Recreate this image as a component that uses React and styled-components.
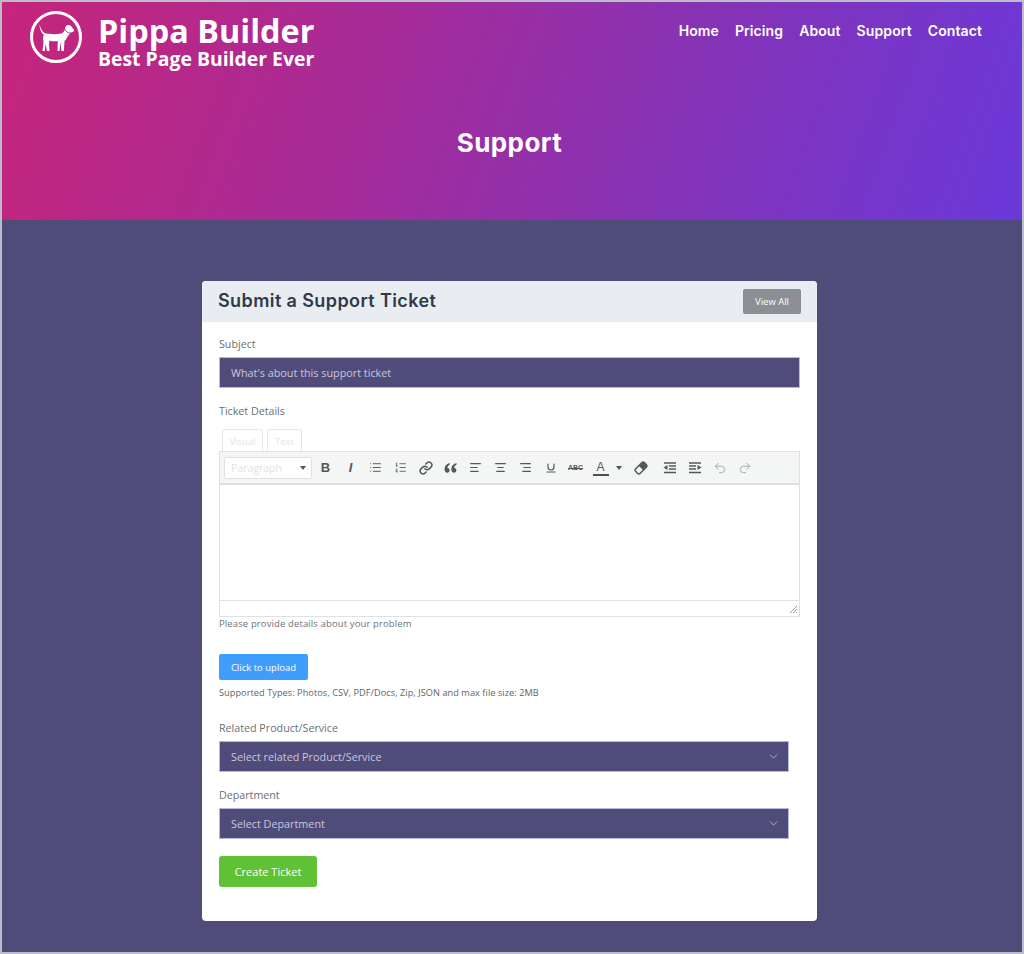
import React from 'react'
import styled, { createGlobalStyle } from 'styled-components'
import { List, ListOrdered, Link, AlignLeft, AlignCenter, AlignRight, Underline, Undo2, Redo2, ChevronDown } from 'lucide-react'

const GlobalStyle = createGlobalStyle`
  html, body { margin: 0; padding: 0; background: #504c7a; }
  * { box-sizing: border-box; }
  body { font-family: "Open Sans", "Liberation Sans", sans-serif; }
`

const Frame = styled.div`
  width: 1024px;
  height: 954px;
  border: 2px solid #bdbccb;
  background: #504c7a;
  overflow: hidden;
`

const Hero = styled.header`
  height: 218px;
  background: linear-gradient(110deg, #c6257a 0%, #a62b98 36%, #8533b6 66%, #6a38da 100%);
  display: flex;
  flex-direction: column;
`

const TopBar = styled.div`
  display: flex;
  justify-content: space-between;
  align-items: flex-start;
  padding: 8px 40px 0 27px;
`

const Brand = styled.div`
  display: flex;
  align-items: flex-start;
  gap: 15px;
  color: #fff;
`

const BrandText = styled.div`
  display: flex;
  flex-direction: column;
  padding-top: 1px;
`

const BrandName = styled.div`
  font-size: 32.4px;
  font-weight: 700;
  line-height: 38px;
`

const BrandTag = styled.div`
  font-size: 19.4px;
  font-weight: 700;
  line-height: 20px;
`

const Nav = styled.nav`
  display: flex;
  gap: 16px;
  padding-top: 12px;
`

const NavLink = styled.a`
  font-family: Inter, "Open Sans", sans-serif;
  font-size: 14px;
  font-weight: 600;
  line-height: 18px;
  letter-spacing: 0.1px;
  color: #fff;
`

const HeroTitle = styled.h1`
  margin: 59px 0 0;
  padding-right: 5px;
  text-align: center;
  color: #fff;
  font-family: Inter, "Open Sans", sans-serif;
  font-size: 26px;
  font-weight: 700;
  line-height: 30px;
  letter-spacing: 0.4px;
`

const Main = styled.main`
  padding: 61px 0 0 200px;
`

const Card = styled.section`
  width: 615px;
  height: 640px;
  background: #fff;
  border-radius: 4px;
  overflow: hidden;
`

const CardHeader = styled.div`
  height: 41px;
  background: #e9edf2;
  display: flex;
  align-items: center;
  justify-content: space-between;
  padding: 0 16px 2px 16px;
`

const CardTitle = styled.h2`
  margin: 0;
  font-family: Inter, "Open Sans", sans-serif;
  font-size: 18px;
  font-weight: 600;
  letter-spacing: 0.4px;
  color: #2f3a4a;
`

const ViewAll = styled.button`
  width: 58px;
  height: 25px;
  margin-top: 1px;
  padding: 0;
  border: 0;
  border-radius: 2px;
  background: #8b8e92;
  color: #fff;
  font: 400 9.5px "Open Sans", sans-serif;
`

const Form = styled.form`
  padding: 14px 17px 0;
  display: flex;
  flex-direction: column;
`

const Label = styled.label`
  display: block;
  height: 16px;
  margin-bottom: 5px;
  font-size: 10.7px;
  line-height: 16px;
  color: #6b6f75;
`

const Field = styled.div`
  width: ${p => p.$width}px;
  height: 31px;
  margin-bottom: ${p => p.$gap}px;
  padding: 0 8px 0 11px;
  background: #504c7a;
  border: 1px solid #b9bbdc;
  color: #c9c6de;
  font-size: 10.8px;
  display: flex;
  align-items: center;
  justify-content: space-between;
`

const Tabs = styled.div`
  display: flex;
  gap: 4px;
  height: 22px;
  margin-top: 5px;
  padding-left: 3px;
`

const Tab = styled.div`
  width: ${p => p.$width}px;
  border: 1px solid #e6e8e8;
  border-bottom: 0;
  border-radius: 3px 3px 0 0;
  color: #e3e5e5;
  font-size: 9.5px;
  line-height: 23px;
  text-align: center;
`

const Editor = styled.div`
  width: 581px;
  border: 1px solid #dfe2e2;
  display: flex;
  flex-direction: column;
`

const Toolbar = styled.div`
  height: 33px;
  padding-left: 4px;
  background: #f4f5f5;
  border-bottom: 2px solid #dcdfdf;
  display: flex;
  align-items: center;
`

const FormatSelect = styled.div`
  width: 88px;
  height: 22px;
  margin-right: 1px;
  padding: 0 5px 0 6px;
  background: #fff;
  border: 1px solid #dfe2e2;
  border-radius: 2px;
  color: #dfe1e1;
  font-size: 10.5px;
  display: flex;
  align-items: center;
  justify-content: space-between;
`

const Caret = styled.span`
  width: 0;
  height: 0;
  border-left: 3px solid transparent;
  border-right: 3px solid transparent;
  border-top: 4px solid #555;
`

const Tool = styled.span`
  width: ${p => p.$width || 25}px;
  height: 22px;
  display: flex;
  align-items: center;
  justify-content: center;
  color: ${p => (p.$muted ? '#a9acac' : '#55585a')};
`

const ToolText = styled.span`
  font-family: "Liberation Sans", sans-serif;
  font-size: 13px;
  font-weight: 700;
  font-style: ${p => (p.$italic ? 'italic' : 'normal')};
  line-height: 1;
`

const StrikeText = styled.span`
  font-family: "Liberation Sans", sans-serif;
  font-size: 7px;
  font-weight: 700;
  text-decoration: line-through;
`

const ColorA = styled.span`
  width: 16px;
  font-family: "Liberation Sans", sans-serif;
  font-size: 12px;
  line-height: 14px;
  text-align: center;
  border-bottom: 2px solid #4c4f50;
`

const EditArea = styled.div`
  height: 115px;
  background: #fff;
`

const StatusBar = styled.div`
  position: relative;
  height: 16px;
  border-top: 1px solid #dfe2e2;
`

const Grip = styled.svg`
  position: absolute;
  right: 1px;
  bottom: 2px;
`

const Help = styled.p`
  margin: 0;
  font-size: 9.5px;
  line-height: 13px;
  letter-spacing: 0.12px;
  color: #6f7378;
`

const UploadButton = styled.button`
  width: 89px;
  height: 26px;
  margin-top: 24px;
  padding: 0;
  border: 0;
  border-radius: 2px;
  background: #3f9dfb;
  color: #fff;
  font: 400 9.5px "Open Sans", sans-serif;
`

const Supported = styled(Help)`
  margin: 6px 0 21px;
  font-size: 9.2px;
  letter-spacing: 0.05px;
  color: #5f6368;
`

const CreateButton = styled.button`
  width: 98px;
  height: 31px;
  padding: 0;
  border: 0;
  border-radius: 3px;
  background: #5fc134;
  color: #fff;
  font: 400 11px "Open Sans", sans-serif;
`

const heavy = { size: 13, strokeWidth: 2.2 }

function DogLogo() {
  return (
    <svg width="54" height="54" viewBox="0 0 54 54" aria-hidden="true">
      <circle cx="27" cy="27" r="24.5" fill="none" stroke="#fff" strokeWidth="3" />
      <path
        fill="#fff"
        d="M10.800 14.200c.2 3 1.600 6.400 4.600 8.800C20 24.500 28 24.500 33 23.200c1.500-.7 2.500-2.200 3-4.200 0-3 2-4.500 4-4 2 .5 3 2 3.500 3l1.700 2c-.2 1.500-1.700 2.200-3.700 2.500-1 1.500-2 3-3.200 4.500-.8 2-1.800 3-2.800 4l-.6 10h-2.400l-1-9-1 9h-2l.3-10c-2.800.5-6.300.5-8.300-.5l-.5 4 .5 6.500H18l-1.500-7-.7 7h-2.300l1-9.500c-.7-2.500-.5-4.500.3-7-2.800-2-4.600-6.500-4-10.300z"
      />
      <path fill="none" stroke="#b22a8e" strokeWidth="0.9" d="M36 19.500c1 2 2.700 3.500 5 3.500" />
    </svg>
  )
}

const QuoteIcon = () => (
  <svg width="13" height="10" viewBox="0 0 13 10" aria-hidden="true">
    <path fill="currentColor" d="M5.500 0C2.500 1 .5 3.200.5 6.200.5 8.500 1.800 9.700 3.200 9.700c1.300 0 2.400-1 2.400-2.400S4.600 5 3.400 5c.2-1.500 1.100-2.800 2.600-3.700zM12.300 0C9.300 1 7.300 3.200 7.300 6.200c0 2.300 1.300 3.500 2.700 3.500 1.300 0 2.400-1 2.400-2.400S11.400 5 10.200 5c.2-1.500 1.100-2.800 2.600-3.700z" />
  </svg>
)

const EraserIcon = () => (
  <svg width="14" height="14" viewBox="0 0 14 14" aria-hidden="true">
    <g transform="rotate(-45 7 7)">
      <rect x="0.800" y="3.800" width="12.400" height="6.400" rx="2" fill="none" stroke="currentColor" strokeWidth="1.500" />
      <path d="M7 3.800h4.200a2 2 0 0 1 2 2v2.400a2 2 0 0 1-2 2H7z" fill="currentColor" />
    </g>
  </svg>
)

// tinymce style indent glyph, arrow on one side and short lines
function IndentIcon({ flip }) {
  return (
    <svg width="14" height="12" viewBox="0 0 14 12" style={flip ? { transform: 'scaleX(-1)' } : undefined} aria-hidden="true">
      <path d="M1 1h12M6 4h7M6 7h7M1 10.500h12" stroke="currentColor" strokeWidth="1.500" fill="none" />
      <path d="M4.500 3v5L0.500 5.500z" fill="currentColor" />
    </svg>
  )
}

function EditorToolbar() {
  return (
    <Toolbar>
      <FormatSelect>Paragraph<Caret /></FormatSelect>
      <Tool><ToolText>B</ToolText></Tool>
      <Tool><ToolText $italic>I</ToolText></Tool>
      <Tool><List {...heavy} strokeWidth={1.8} /></Tool>
      <Tool><ListOrdered {...heavy} strokeWidth={1.6} /></Tool>
      <Tool><Link size={14} strokeWidth={2.6} /></Tool>
      <Tool><QuoteIcon /></Tool>
      <Tool><AlignLeft {...heavy} /></Tool>
      <Tool><AlignCenter {...heavy} /></Tool>
      <Tool><AlignRight {...heavy} /></Tool>
      <Tool><Underline size={12} strokeWidth={2.4} /></Tool>
      <Tool><StrikeText>ABC</StrikeText></Tool>
      <Tool><ColorA>A</ColorA></Tool>
      <Tool $width={12}><Caret /></Tool>
      <Tool $width={32}><EraserIcon /></Tool>
      <Tool><IndentIcon /></Tool>
      <Tool><IndentIcon flip /></Tool>
      <Tool $muted><Undo2 size={14} strokeWidth={1.7} /></Tool>
      <Tool $muted><Redo2 size={14} strokeWidth={1.7} /></Tool>
    </Toolbar>
  )
}

export default function App() {
  return (
    <>
      <GlobalStyle />
      <Frame>
        <Hero>
          <TopBar>
            <Brand>
              <DogLogo />
              <BrandText>
                <BrandName>Pippa Builder</BrandName>
                <BrandTag>Best Page Builder Ever</BrandTag>
              </BrandText>
            </Brand>
            <Nav>
              {['Home', 'Pricing', 'About', 'Support', 'Contact'].map(item => (
                <NavLink key={item}>{item}</NavLink>
              ))}
            </Nav>
          </TopBar>
          <HeroTitle>Support</HeroTitle>
        </Hero>
        <Main>
          <Card>
            <CardHeader>
              <CardTitle>Submit a Support Ticket</CardTitle>
              <ViewAll type="button">View All</ViewAll>
            </CardHeader>
            <Form>
              <Label>Subject</Label>
              <Field $width={581} $gap={15}>What's about this support ticket</Field>
              <Label>Ticket Details</Label>
              <Tabs>
                <Tab $width={41}>Visual</Tab>
                <Tab $width={35}>Text</Tab>
              </Tabs>
              <Editor>
                <EditorToolbar />
                <EditArea />
                <StatusBar>
                  <Grip width="9" height="9" viewBox="0 0 9 9" aria-hidden="true">
                    <path d="M8 1 1 8M8 4 4 8M8 7 7 8" stroke="#9a9d9d" strokeWidth="1" />
                  </Grip>
                </StatusBar>
              </Editor>
              <Help>Please provide details about your problem</Help>
              <UploadButton type="button">Click to upload</UploadButton>
              <Supported>Supported Types: Photos, CSV, PDF/Docs, Zip, JSON and max file size: 2MB</Supported>
              <Label>Related Product/Service</Label>
              <Field $width={570} $gap={15}>
                Select related Product/Service
                <ChevronDown size={13} strokeWidth={1.5} color="#c5c3dc" />
              </Field>
              <Label>Department</Label>
              <Field $width={570} $gap={17}>
                Select Department
                <ChevronDown size={13} strokeWidth={1.5} color="#c5c3dc" />
              </Field>
              <CreateButton type="button">Create Ticket</CreateButton>
            </Form>
          </Card>
        </Main>
      </Frame>
    </>
  )
}
